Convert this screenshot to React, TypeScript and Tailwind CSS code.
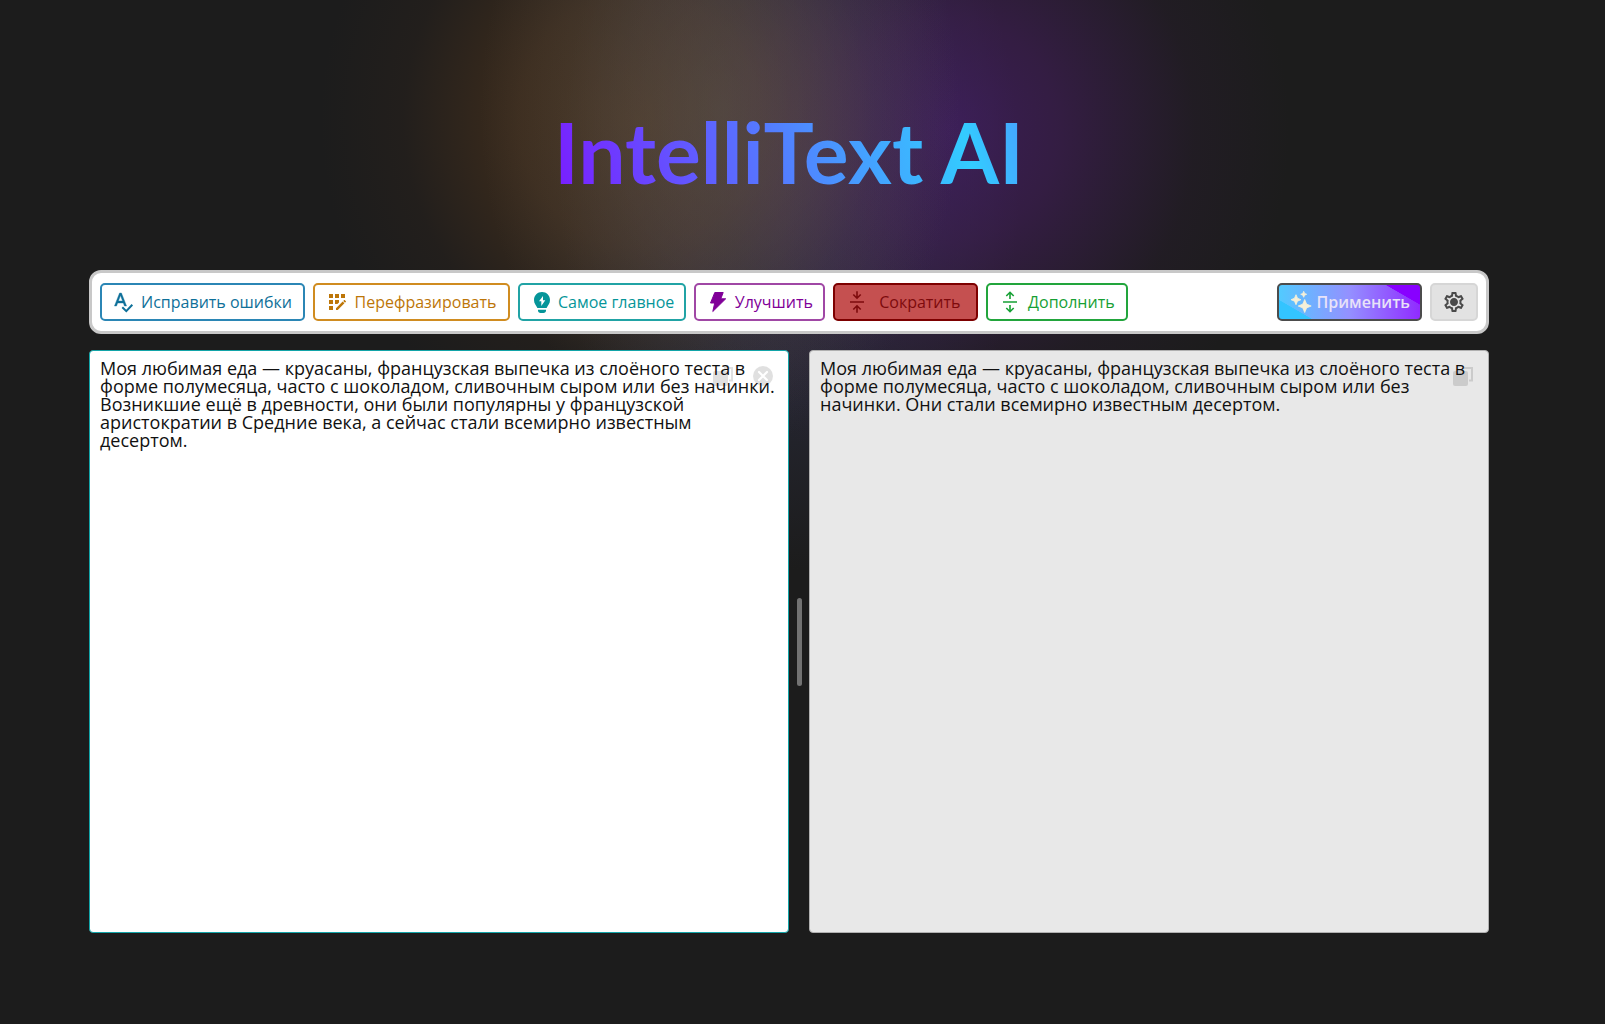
import { useState, type ReactNode } from "react";
import { MdAppRegistration, MdOutlineSettings } from "react-icons/md";

const SOURCE_TEXT =
  "Моя любимая еда — круасаны, французская выпечка из слоёного теста в форме полумесяца, часто с шоколадом, сливочным сыром или без начинки. Возникшие ещё в древности, они были популярны у французской аристократии в Средние века, а сейчас стали всемирно известным десертом.";
const RESULT_TEXT =
  "Моя любимая еда — круасаны, французская выпечка из слоёного теста в форме полумесяца, часто с шоколадом, сливочным сыром или без начинки. Они стали всемирно известным десертом.";

function Icon({ children }: { children: ReactNode }) {
  return (
    <svg viewBox="0 0 24 24" className="size-6 shrink-0" fill="none" aria-hidden="true">
      {children}
    </svg>
  );
}

function SpellIcon() {
  return (
    <Icon>
      <path
        fill="currentColor"
        stroke="currentColor"
        strokeWidth="0.4"
        d="M12.45 16h2.09L9.43 3H7.57L2.46 16h2.09l1.12-3h5.64l1.14 3zm-6.02-5L8.5 5.48 10.57 11H6.43z"
      />
      <path d="M10.3 17.2l4 3.9 6-6.3" stroke="currentColor" strokeWidth="2" />
    </Icon>
  );
}

function BulbIcon() {
  return (
    <Icon>
      <path
        fill="currentColor"
        fillRule="evenodd"
        d="M12 2c-4.5 0-8 3.5-8 7.9 0 3.6 2 5.2 3.4 8.1h9.2c1.4-2.9 3.4-4.5 3.4-8.1C20 5.5 16.5 2 12 2zm1 4l-4 5.3h2.3V16l4-5.7H13z"
      />
      <path fill="currentColor" d="M8 19.8h8v.7c0 1.4-1 2.5-2.5 2.5h-3C9 23 8 21.9 8 20.5z" />
    </Icon>
  );
}

function BoltIcon() {
  return (
    <Icon>
      <path
        fill="currentColor"
        stroke="currentColor"
        strokeWidth="1"
        strokeLinejoin="round"
        d="M8.8 2.5h8.4l-2.4 6.3h4.9L6.800 21.500l1.900-8.500H4.500z"
      />
    </Icon>
  );
}

function ShrinkIcon() {
  return (
    <Icon>
      <path
        stroke="currentColor"
        strokeWidth="1.6"
        d="M5 12h14M12 1.3V8M8.3 4.500L12 8.200l3.700-3.700M12 22.700V16M8.300 19.500L12 15.800l3.700 3.700"
      />
    </Icon>
  );
}

function GrowIcon() {
  return (
    <Icon>
      <path
        stroke="currentColor"
        strokeWidth="1.6"
        d="M5 12h14M12 9V2.500M8.300 6L12 2.300 15.700 6M12 15v6.500M8.300 18l3.700 3.700 3.700-3.700"
      />
    </Icon>
  );
}

function SparkleIcon() {
  return (
    <Icon>
      <g fill="#f5f0d8" stroke="#f5f0d8" strokeWidth="0.8" strokeLinejoin="round">
        <path d="M15.700 9.500l1.900 4.600 4.600 1.900-4.600 1.900-1.900 4.600-1.900-4.600L9.200 16l4.600-1.900z" />
        <path d="M7 4.700l1.500 3.500L12 9.700l-3.500 1.500L7 14.700l-1.500-3.500L2 9.700l3.500-1.500z" />
        <path d="M14.700 1.300l.9 2.100 2.100.9-2.100.9-.9 2.100-.9-2.100-2.100-.9 2.100-.9z" />
      </g>
    </Icon>
  );
}

function CopyIcon() {
  return (
    <svg viewBox="0 0 20 20" className="size-5" fill="none" aria-hidden="true">
      <rect x="0" y="5" width="15" height="15" rx="2" fill="currentColor" />
      <path d="M11 2h8v12.500h-3" stroke="currentColor" strokeWidth="2" />
    </svg>
  );
}

const ACTIONS = [
  { id: "fix", label: "Исправить ошибки", icon: <SpellIcon />, look: "min-w-[205px] border-[#2b86b5] bg-white text-[#0e7099]" },
  {
    id: "rephrase",
    label: "Перефразировать",
    icon: <MdAppRegistration className="size-6 shrink-0" aria-hidden="true" />,
    look: "min-w-[197px] border-[#d08c20] bg-white text-[#bd7608]",
  },
  { id: "main", label: "Самое главное", icon: <BulbIcon />, look: "min-w-[167px] border-[#21a3a5] bg-white text-[#059599]" },
  { id: "improve", label: "Улучшить", icon: <BoltIcon />, look: "min-w-[131px] border-[#a047a5] bg-white text-[#800098]" },
  { id: "shorten", label: "Сократить", icon: <ShrinkIcon />, look: "min-w-[145px] border-[#7d0000] bg-[#c55050] text-[#7d0a0c]" },
  { id: "extend", label: "Дополнить", icon: <GrowIcon />, look: "min-w-[142px] border-[#22a53c] bg-white text-[#16a034]" },
];

export default function App() {
  const [source, setSource] = useState(SOURCE_TEXT);
  const [result, setResult] = useState(RESULT_TEXT);

  return (
    <div
      lang="ru"
      className="min-h-screen overflow-hidden bg-[#1c1c1c] bg-[radial-gradient(ellipse_240px_340px_at_720px_110px,rgba(100,104,100,0.36),rgba(95,98,105,0.24)_45%,transparent),radial-gradient(ellipse_320px_330px_at_640px_120px,rgba(100,64,26,0.6),rgba(98,62,28,0.45)_38%,rgba(80,50,28,0.12)_74%,transparent),radial-gradient(ellipse_340px_350px_at_950px_130px,rgba(75,30,115,0.65),rgba(75,30,105,0.5)_32%,rgba(60,30,75,0.16)_72%,transparent),radial-gradient(ellipse_230px_390px_at_790px_180px,rgba(60,65,100,0.5),rgba(55,58,90,0.38)_45%,transparent)] bg-no-repeat pl-4 pr-[43px] font-['Open_Sans',sans-serif]"
    >
      <div className="mx-auto flex min-h-screen max-w-[1400px] flex-col">
        <h1 className="pt-[102px] text-center font-['Lato',sans-serif] text-[84px] leading-[100px] font-bold">
          <span className="bg-[linear-gradient(75deg,#7a1cff,#33ccff_86%,#48a0ff)] bg-clip-text text-transparent">
            IntelliText AI
          </span>
        </h1>

        <div className="mt-[68px] flex flex-wrap items-center gap-2 rounded-xl border-[3px] border-[#c8c8c8] bg-white px-2 py-2.5">
          {ACTIONS.map((a) => (
            <button
              key={a.id}
              type="button"
              className={`flex h-[38px] items-center gap-1 rounded-[5px] border-2 px-2.5 text-base whitespace-nowrap ${a.look}`}
            >
              {a.icon}
              <span className="grow text-center">{a.label}</span>
            </button>
          ))}
          <button
            type="button"
            className="ml-auto flex h-[38px] min-w-[144px] items-center gap-1 rounded-[5px] border-2 border-[#4c4c4c] bg-[linear-gradient(30deg,#33c4ff_18%,transparent_18.5%,transparent_81%,#8800ff_81.5%),linear-gradient(90deg,#50ccff,#9490ff_50%,#9028ff)] bg-origin-border px-2.5 text-base font-semibold whitespace-nowrap text-[#e8e2f8]"
          >
            <SparkleIcon />
            <span className="grow text-center">Применить</span>
          </button>
          <button
            type="button"
            aria-label="Настройки"
            className="flex h-[38px] w-12 items-center justify-center rounded-[5px] border-2 border-[#d6d6d6] bg-[#e2e2e2] text-[#4a4a4a]"
          >
            <span className="grid place-items-center">
              <MdOutlineSettings className="col-start-1 row-start-1 size-6" aria-hidden="true" />
              <span className="col-start-1 row-start-1 size-[6px] rounded-full bg-current" />
            </span>
          </button>
        </div>

        <div className="mt-4 flex h-[583px]">
          <div className="relative min-w-0 flex-[700_1_0%]">
            <textarea
              aria-label="Исходный текст"
              value={source}
              onChange={(e) => setSource(e.target.value)}
              spellCheck={false}
              className="block h-full w-full resize-none rounded border border-[#12a4a8] bg-white px-2.5 py-2 text-lg leading-[18px] text-[#111] outline-none"
            />
            <button type="button" aria-label="Копировать" className="absolute top-4 right-14 text-black/12">
              <CopyIcon />
            </button>
            <button type="button" aria-label="Очистить" className="absolute top-4 right-4 text-black/12">
              <svg viewBox="0 0 20 20" className="size-5" fill="none" aria-hidden="true">
                <circle cx="10" cy="10" r="10" fill="currentColor" />
                <path d="M6 6l8 8M14 6l-8 8" stroke="#fff" strokeWidth="2.2" strokeLinecap="round" />
              </svg>
            </button>
          </div>
          <div className="flex w-5 items-center justify-center">
            <div role="separator" aria-orientation="vertical" className="h-22 w-[5px] rounded-full bg-[#727272]" />
          </div>
          <div className="relative min-w-0 flex-[680_1_0%]">
            <textarea
              aria-label="Результат"
              value={result}
              onChange={(e) => setResult(e.target.value)}
              spellCheck={false}
              className="block h-full w-full resize-none rounded border border-[#b0b0b0] bg-[#e8e8e8] px-2.5 py-2 text-lg leading-[18px] text-[#111] outline-none"
            />
            <button type="button" aria-label="Копировать" className="absolute top-4 right-4 text-black/12">
              <CopyIcon />
            </button>
          </div>
        </div>
      </div>
    </div>
  );
}
